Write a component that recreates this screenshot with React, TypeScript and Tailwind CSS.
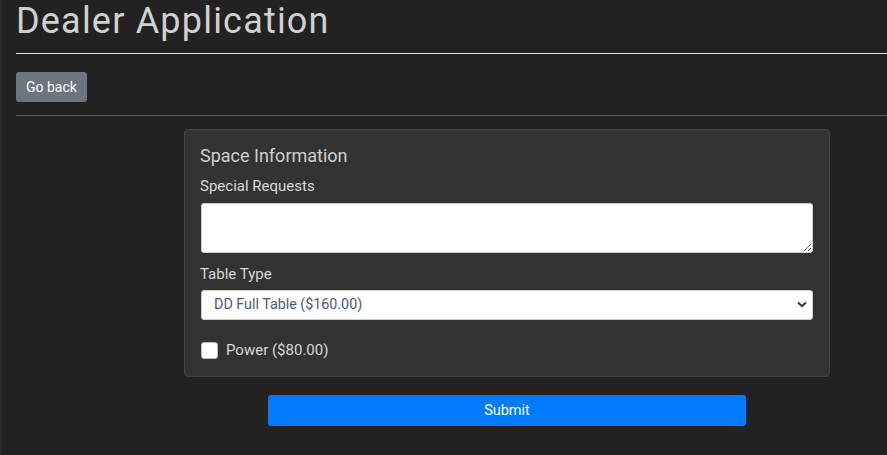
export default function App() {
  return (
    <div className="min-h-[455px] bg-[#222222] border-l-2 border-[#2a2a2a] text-[#dddddd] font-['Roboto',sans-serif] overflow-hidden">
      <div className="pl-[14px]">
        <h1 className="text-[36px] leading-[40px] pt-[1px] text-[#d0d0d0] tracking-[1.2px]">Dealer Application</h1>
        <hr className="mt-[12px] border-t border-[#e6e6e6]" />
        <button className="mt-[18px] h-[30px] px-[10px] rounded-[3px] bg-[#6c757d] text-white text-[14px]">Go back</button>
        <hr className="mt-[13px] border-t border-[#5e5e5e]" />
        <div className="ml-[168px] mt-[13px] w-[646px] rounded-[4px] border border-[#444444] bg-[#333333] px-[16px] pt-[14px] pb-[16px]">
          <h2 className="-ml-[1px] text-[18px] leading-[24px] text-[#cfcfcf]">Space Information</h2>
          <label className="block -ml-[1px] mt-[8px] text-[15px] leading-[20px] text-[#d8d8d8]">Special Requests</label>
          <textarea className="block mt-[7px] w-[612px] h-[50px] rounded-[3px] bg-white border border-[#cccccc]" />
          <label className="block -ml-[1px] mt-[11px] text-[15px] leading-[20px] text-[#d8d8d8]">Table Type</label>
          <div className="relative mt-[6px] w-[612px]">
            <select className="block w-full h-[30px] rounded-[3px] bg-white border border-[#cccccc] pl-[12px] text-[14.3px] text-[#495a7a] appearance-none">
              <option>DD Full Table ($160.00)</option>
            </select>
            <svg className="absolute right-[6px] top-[11px] pointer-events-none" width="10" height="7" viewBox="0 0 10 7">
              <path d="M1 1.5 L5 5.2 L9 1.5" fill="none" stroke="#333" strokeWidth="2" />
            </svg>
          </div>
          <div className="flex items-center mt-[20px]">
            <span className="block w-[17px] h-[17px] rounded-[3px] bg-white border border-[#bbbbbb]" />
            <span className="ml-[8px] text-[15px] leading-[20px] text-[#d8d8d8]">Power ($80.00)</span>
          </div>
        </div>
        <button className="block ml-[252px] mt-[18px] w-[478px] h-[31px] rounded-[3px] bg-[#007bff] text-white text-[14.5px]">Submit</button>
      </div>
    </div>
  );
}
